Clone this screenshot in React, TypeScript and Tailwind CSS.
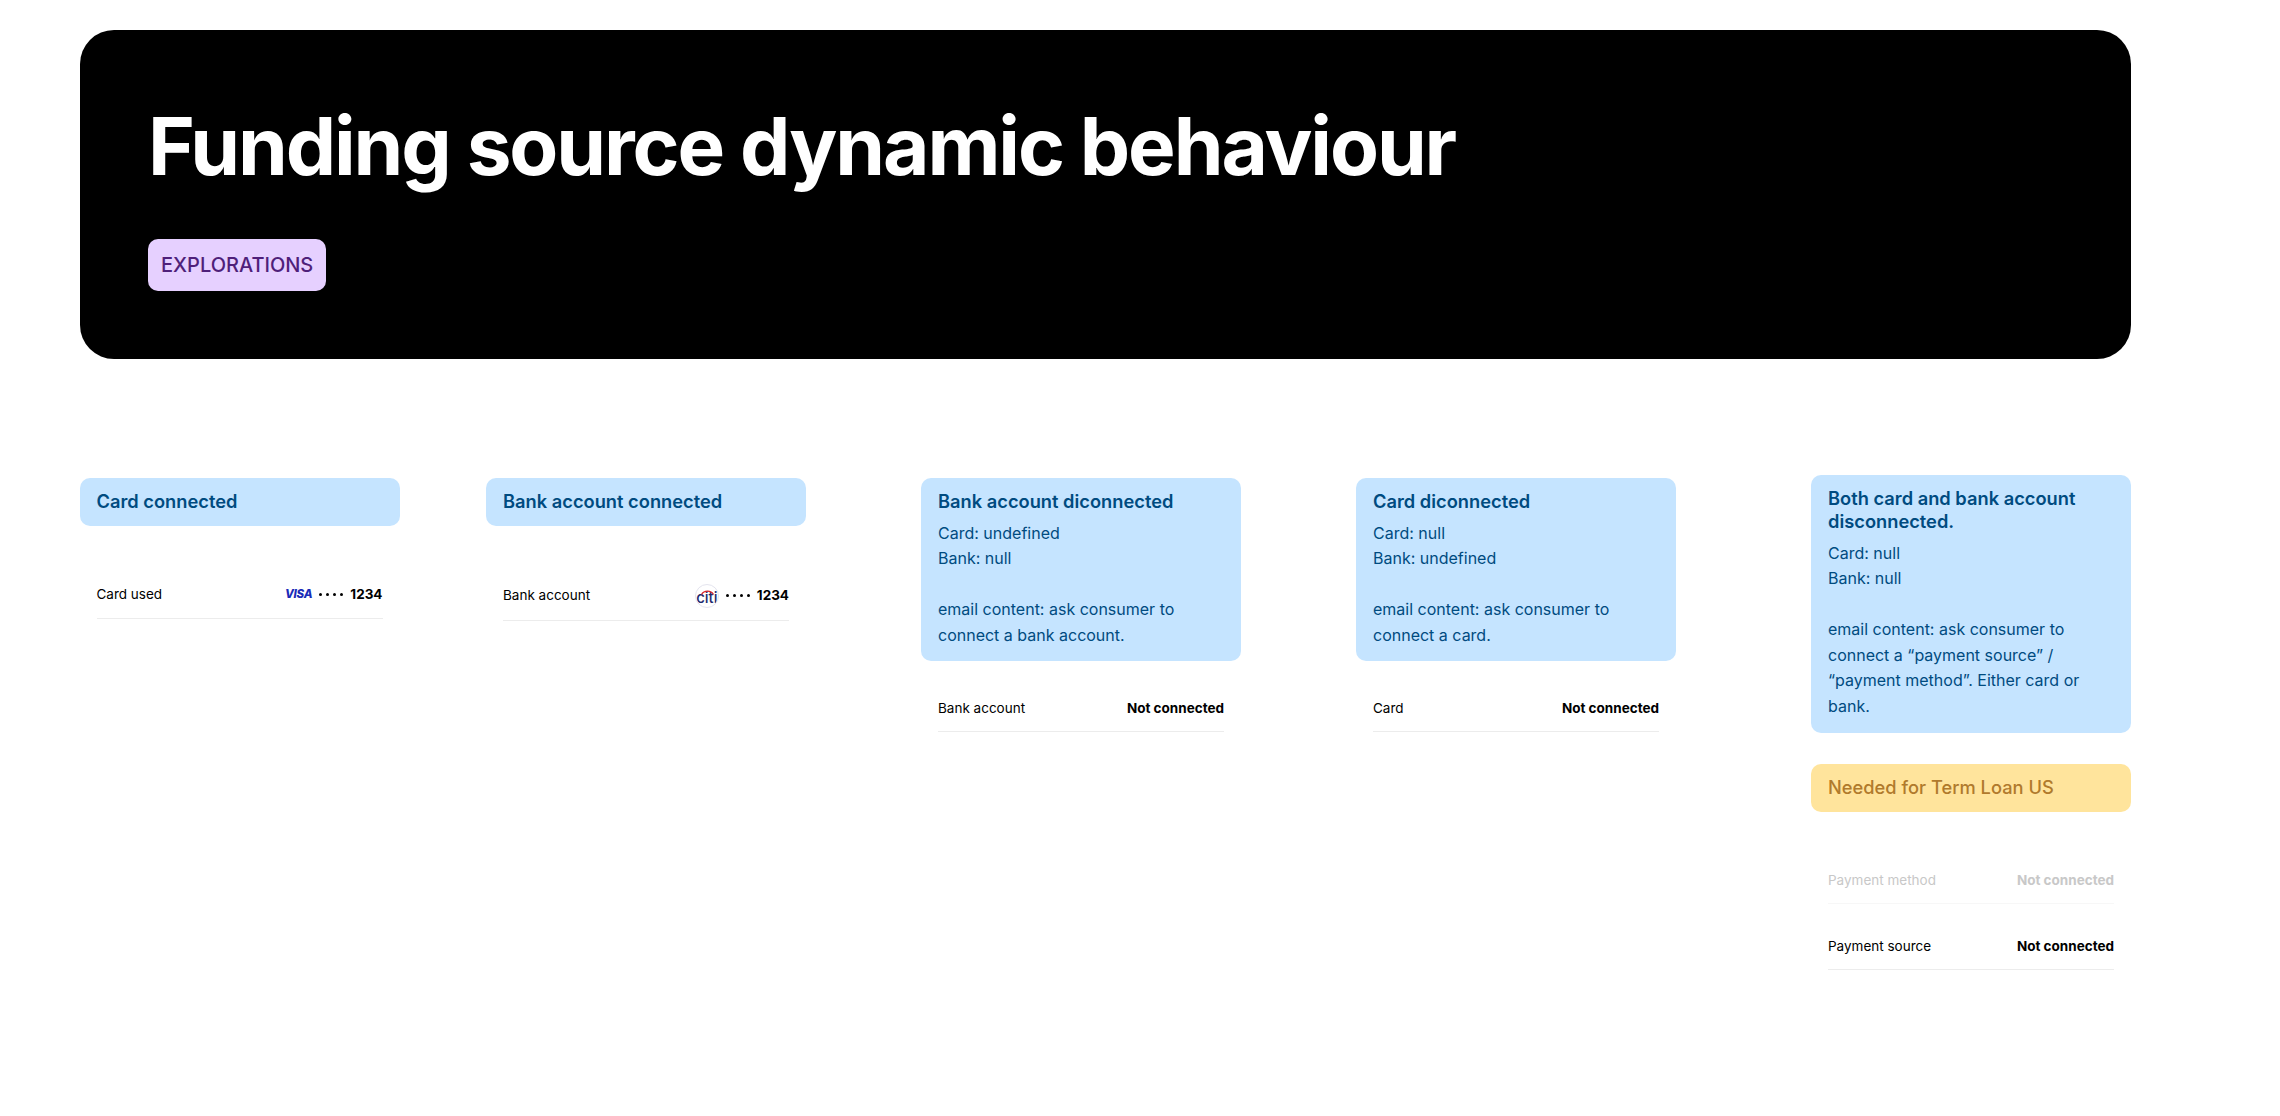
import React from "react";

const Dots = () => (
  <span className="flex items-center gap-[4px]">
    <span className="w-[3px] h-[3px] rounded-full bg-black" />
    <span className="w-[3px] h-[3px] rounded-full bg-black" />
    <span className="w-[3px] h-[3px] rounded-full bg-black" />
    <span className="w-[3px] h-[3px] rounded-full bg-black" />
  </span>
);

const Row = ({ label, value, faded, tall, children }: { label: string; value?: string; faded?: boolean; tall?: boolean; children?: React.ReactNode }) => (
  <div className={`flex items-center justify-between mx-[17px] border-b text-[13.5px] ${tall ? "h-[50px]" : "h-[48px]"} ${faded ? "border-[#f7f7f7] text-[#c8c8c8]" : "border-[#ececec] text-black"}`}>
    <span>{label}</span>
    {value ? <span className="font-bold">{value}</span> : children}
  </div>
);

const Note = ({ title, lines }: { title: React.ReactNode; lines?: string[] }) => (
  <div className="rounded-[10px] bg-[#c5e4ff] text-[#004b80] px-[17px] pt-[11.5px] pb-[13px]">
    <div className="text-[18.3px] leading-[23px] font-semibold">{title}</div>
    {lines && (
      <div className="mt-[8px] text-[16px] leading-[25.6px]">
        {lines.map((l, i) => (
          <div key={i} className="min-h-[25.6px]">{l}</div>
        ))}
      </div>
    )}
  </div>
);

const Citi = () => (
  <span className="relative flex items-center justify-center w-[24px] h-[24px] rounded-full border border-[#e4e4ee] bg-white overflow-hidden">
    <svg className="absolute left-[4px] top-[4px]" width="15" height="6" viewBox="0 0 15 6">
      <path d="M1.5 5.5 C4 1, 11 1, 13.5 5.5" fill="none" stroke="#d8262c" strokeWidth="1.3" />
    </svg>
    <span className="text-[15px] leading-none text-[#1d2a6d] font-medium mt-[3px]">citi</span>
  </span>
);

export default function App() {
  return (
    <div className="w-[2280px] h-[1116px] bg-white pl-[79.5px] pt-[30px] font-['Inter',sans-serif] overflow-hidden">
      <div className="w-[2051.5px] h-[329px] rounded-[34px] bg-black pl-[68.5px] pt-[66px]">
        <h1 className="text-[80px] leading-[100px] font-bold tracking-[-0.026em] text-white">Funding source dynamic behaviour</h1>
        <div className="mt-[43px] w-fit h-[52px] flex items-center px-[13px] rounded-[10px] bg-[#e6d0ff] text-[#4f1f7a] text-[20px] font-medium">EXPLORATIONS</div>
      </div>
      <div className="flex items-start mt-[116px]">
        <div className="w-[320px] pt-[3px]">
          <Note title="Card connected" />
          <div className="mt-[45.5px]">
            <Row label="Card used">
              <span className="flex items-center gap-[7px]">
                <span className="text-[#1a2bb8] italic font-extrabold text-[11.5px] tracking-[-0.02em]">VISA</span>
                <Dots />
                <span className="font-bold">1234</span>
              </span>
            </Row>
          </div>
        </div>
        <div className="w-[320px] pt-[3px] ml-[86.5px]">
          <Note title="Bank account connected" />
          <div className="mt-[45.5px]">
            <Row label="Bank account" tall>
              <span className="flex items-center gap-[7px]">
                <Citi />
                <Dots />
                <span className="font-bold">1234</span>
              </span>
            </Row>
          </div>
        </div>
        <div className="w-[320px] pt-[3px] ml-[115px]">
          <Note title="Bank account diconnected" lines={["Card: undefined", "Bank: null", "", "email content: ask consumer to", "connect a bank account."]} />
          <div className="mt-[23px]">
            <Row label="Bank account" value="Not connected" />
          </div>
        </div>
        <div className="w-[320px] pt-[3px] ml-[115px]">
          <Note title="Card diconnected" lines={["Card: null", "Bank: undefined", "", "email content: ask consumer to", "connect a card."]} />
          <div className="mt-[23px]">
            <Row label="Card" value="Not connected" />
          </div>
        </div>
        <div className="w-[320px] ml-[135px]">
          <Note title="Both card and bank account disconnected." lines={["Card: null", "Bank: null", "", "email content: ask consumer to", "connect a “payment source” /", "“payment method”. Either card or", "bank."]} />
          <div className="mt-[31.5px] rounded-[10px] bg-[#ffe49c] text-[#b07a2c] px-[17px] h-[48px] flex items-center text-[18.3px] font-medium">Needed for Term Loan US</div>
          <div className="mt-[44px]">
            <Row label="Payment method" value="Not connected" faded />
          </div>
          <div className="mt-[18px]">
            <Row label="Payment source" value="Not connected" />
          </div>
        </div>
      </div>
    </div>
  );
}
